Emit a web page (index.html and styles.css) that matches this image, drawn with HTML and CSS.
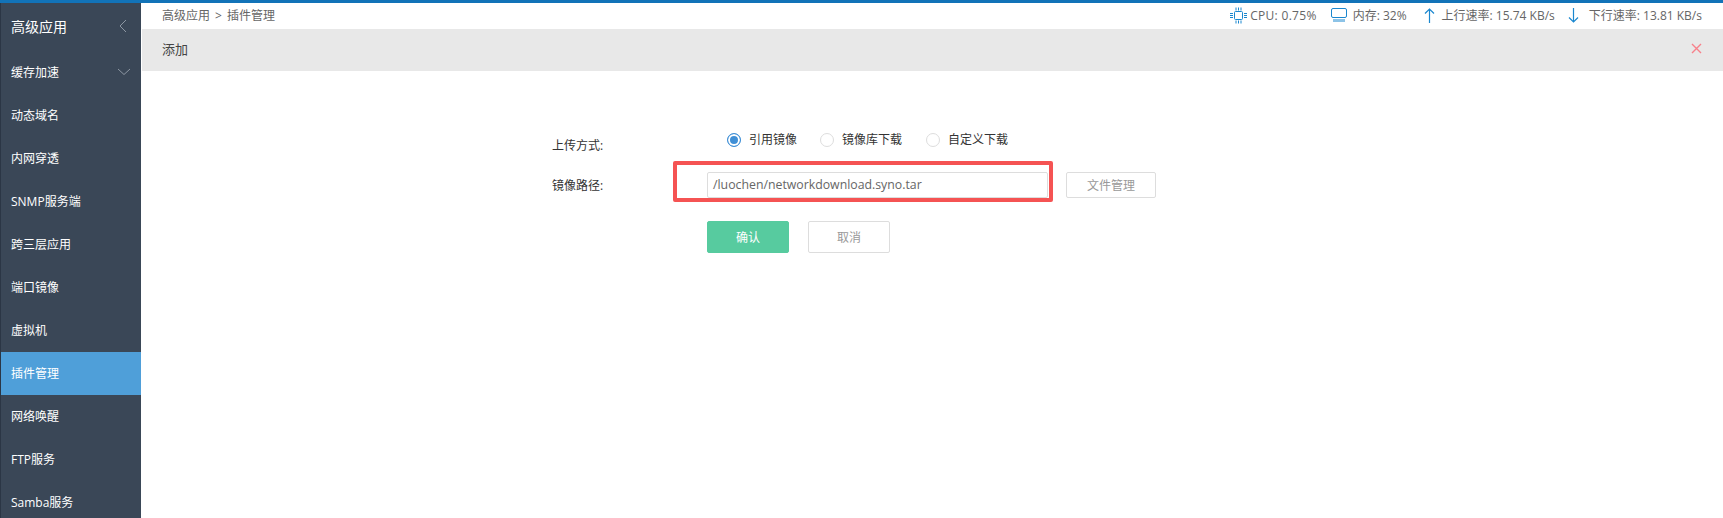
FILE: index.html
```html
<!DOCTYPE html>
<html lang="zh">
<head>
<meta charset="utf-8">
<title>插件管理</title>
<link rel="stylesheet" href="styles.css">
</head>
<body>
<div class="app">
  <aside class="sidebar">
    <div class="side-head"><span>高级应用</span>
      <svg class="chev-left" width="8" height="14" viewBox="0 0 8 14"><path d="M7 1 1 7l6 6" fill="none" stroke="#8d97a3" stroke-width="1"/></svg>
    </div>
    <ul class="menu">
      <li class="menu-item"><span>缓存加速</span>
        <svg class="chev-down" width="14" height="8" viewBox="0 0 14 8"><path d="M1 1l6 5.500L13 1" fill="none" stroke="#8d97a3" stroke-width="1"/></svg>
      </li>
      <li class="menu-item">动态域名</li>
      <li class="menu-item">内网穿透</li>
      <li class="menu-item">SNMP服务端</li>
      <li class="menu-item">跨三层应用</li>
      <li class="menu-item">端口镜像</li>
      <li class="menu-item">虚拟机</li>
      <li class="menu-item active">插件管理</li>
      <li class="menu-item">网络唤醒</li>
      <li class="menu-item flush">FTP服务</li>
      <li class="menu-item">Samba服务</li>
    </ul>
  </aside>
  <main class="main">
    <header class="topbar">
      <div class="crumb">高级应用 &gt; 插件管理</div>
      <div class="stats">
        <div class="stat stat-cpu">
          <svg width="17" height="17" viewBox="0 0 17 17" fill="none" stroke="#1a87cf"><rect x="4.500" y="4.500" width="8" height="8" rx="1"/><path d="M6 .500v3M8.500.500v3M11 .500v3M6 13.500v3M8.500 13.500v3M11 13.500v3M0 6.500h3M0 8.500h3M0 10.500h3M14 6.500h3M14 8.500h3M14 10.500h3"/></svg>
          <span>CPU: 0.75%</span>
        </div>
        <div class="stat stat-mem">
          <svg width="16" height="14" viewBox="0 0 16 14" fill="none" stroke="#1a87cf"><rect x=".500" y=".500" width="15" height="9" rx="1.500"/><path d="M3 11v3M5 11v3M7 11v3M9 11v3M11 11v3M13 11v3"/></svg>
          <span>内存: 32%</span>
        </div>
        <div class="stat stat-up">
          <svg width="11" height="15" viewBox="0 0 11 15" fill="none" stroke="#1a87cf" stroke-width="1.200"><path d="M5.500 15V1M1 5.500 5.500 1 10 5.500"/></svg>
          <span>上行速率: 15.74 KB/s</span>
        </div>
        <div class="stat stat-down">
          <svg width="11" height="15" viewBox="0 0 11 15" fill="none" stroke="#1a87cf" stroke-width="1.200"><path d="M5.500 0v14M1 9.500 5.500 14 10 9.500"/></svg>
          <span>下行速率: 13.81 KB/s</span>
        </div>
      </div>
    </header>
    <div class="panel-head">
      <span>添加</span>
      <svg width="11" height="11" viewBox="0 0 11 11"><path d="M1 1l9 9M10 1l-9 9" stroke="#f8808a" stroke-width="1.400" fill="none"/></svg>
    </div>
    <form class="form">
      <div class="row row-radio">
        <label class="label">上传方式:</label>
        <div class="radios">
          <span class="radio-opt opt-1"><i class="radio checked"></i>引用镜像</span>
          <span class="radio-opt opt-2"><i class="radio"></i>镜像库下载</span>
          <span class="radio-opt"><i class="radio"></i>自定义下载</span>
        </div>
      </div>
      <div class="row row-path">
        <label class="label">镜像路径:</label>
        <div class="path-wrap">
          <div class="path-input">/luochen/networkdownload.syno.tar</div>
          <div class="highlight"></div>
        </div>
        <button type="button" class="btn btn-file">文件管理</button>
      </div>
      <div class="actions">
        <button type="button" class="btn btn-ok">确认</button>
        <button type="button" class="btn btn-cancel">取消</button>
      </div>
    </form>
  </main>
</div>
</body>
</html>
```

FILE: styles.css
```css
* { box-sizing: border-box; }
html, body { margin: 0; padding: 0; height: 100%; overflow: hidden; }
body {
  font-family: "Open Sans", "Noto Sans CJK SC", sans-serif;
  font-size: 12px;
  color: #333;
  background: #fff;
}
.app { display: flex; height: 518px; border-top: 3px solid #1273b8; }

.sidebar {
  width: 141px;
  flex: none;
  background: #3a4757;
  border-left: 1px solid #2b3645;
  color: #fff;
  overflow: hidden;
}
.side-head {
  height: 48px;
  padding: 0 12px 2px 10px;
  display: flex;
  align-items: center;
  justify-content: space-between;
  font-size: 14px;
}
.menu { list-style: none; margin: 0; padding: 0; }
.menu-item {
  height: 43px;
  padding: 0 10px 2px;
  display: flex;
  align-items: center;
  justify-content: space-between;
  font-size: 12px;
}
.menu-item.active { background: #4f9fd9; }
.menu-item.flush { margin-left: -1px; padding-left: 11px; background: #3a4757; }
.chev-left { margin-right: 2px; }

.main { flex: 1; min-width: 0; }
.topbar {
  height: 26px;
  display: flex;
  align-items: center;
  justify-content: space-between;
  padding: 0 21px 2px;
  color: #666;
}
.crumb { font-size: 12px; word-spacing: 2px; }
.stats { display: flex; align-items: center; }
.stat { display: flex; align-items: center; }
.stat-cpu { margin-right: 14px; gap: 3px; letter-spacing: .3px; }
.stat-mem { margin-right: 17px; gap: 6px; }
.stat-up { margin-right: 13px; gap: 7px; }
.stat-down { gap: 10px; }

.panel-head {
  height: 42px;
  margin-left: 1px;
  padding: 0 21px 3px 20px;
  background: #e8e8e8;
  display: flex;
  align-items: center;
  justify-content: space-between;
  font-size: 13px;
  color: #444;
}

.form { padding: 58px 0 0 411px; }
.row { display: flex; }
.label { width: 155px; flex: none; color: #333; }
.row-radio { height: 37px; }
.row-radio .label { padding-top: 7px; }
.radios { display: flex; color: #333; padding-top: 4px; }
.radio-opt { display: flex; align-items: flex-start; gap: 8px; line-height: 14px; }
.opt-1 { margin-right: 23px; padding-left: 20px; }
.opt-2 { margin-right: 24px; }
.radio {
  width: 14px;
  height: 14px;
  border: 1px solid #ddd;
  border-radius: 50%;
  background: #fff;
  display: block;
}
.radio.checked {
  border-color: #3f8fd6;
  background: #3f8fd6;
  box-shadow: inset 0 0 0 2px #fff;
}
.row-path { height: 26px; align-items: center; margin-top: 6px; }
.path-wrap { position: relative; width: 341px; height: 26px; }
.path-input {
  height: 26px;
  border: 1px solid #ddd;
  border-radius: 2px;
  padding: 0 5px;
  font-size: 12.300px;
  line-height: 24px;
  color: #666;
}
.highlight {
  position: absolute;
  left: -34px;
  top: -11px;
  width: 380px;
  height: 41px;
  border: 4px solid #f55353;
  border-radius: 2px;
  pointer-events: none;
}
.btn {
  font: inherit;
  border: 1px solid #ddd;
  border-radius: 2px;
  background: #fff;
  color: #999;
  cursor: pointer;
  padding: 0;
}
.btn-file { width: 90px; height: 26px; margin-left: 18px; }
.actions { display: flex; gap: 19px; padding: 23px 0 0 155px; }
.btn-ok { width: 82px; height: 32px; background: #57cb9f; border-color: #57cb9f; color: #fff; }
.btn-cancel { width: 82px; height: 32px; }
```
